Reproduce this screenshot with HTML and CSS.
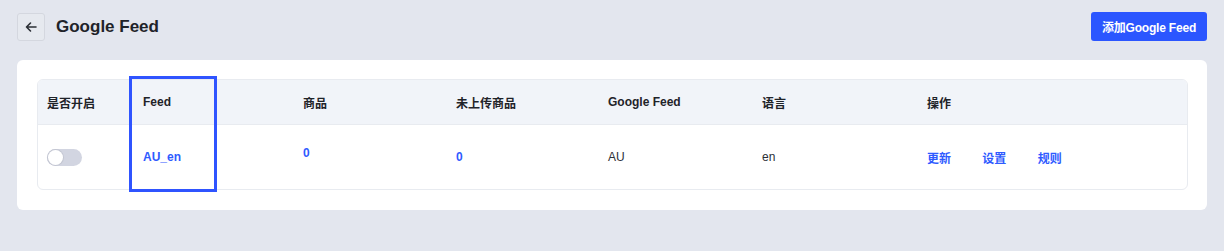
FILE: index.html
```html
<!DOCTYPE html>
<html lang="zh-CN">
<head>
    <meta charset="UTF-8">
    <meta name="viewport" content="width=device-width, initial-scale=1.0">
    <title>Google Feed</title>
    <link rel="stylesheet" href="styles.css">
</head>
<body>
    <div class="page-header">
        <div class="header-left">
            <button class="back-btn" aria-label="返回">
                <svg width="14" height="14" viewBox="0 0 14 14">
                    <path d="M12 7H2.5M6.5 3L2.5 7l4 4" fill="none" stroke="#2b2f36" stroke-width="1.6" stroke-linecap="round" stroke-linejoin="round"/>
                </svg>
            </button>
            <h1>Google Feed</h1>
        </div>
        <button class="primary-btn">添加Google Feed</button>
    </div>

    <div class="card">
        <div class="table-wrap">
            <table class="feed-table">
                <colgroup>
                    <col style="width: 96px">
                    <col style="width: 160px">
                    <col style="width: 153px">
                    <col style="width: 152px">
                    <col style="width: 154px">
                    <col style="width: 165px">
                    <col>
                </colgroup>
                <thead>
                    <tr>
                        <th>是否开启</th>
                        <th>Feed</th>
                        <th>商品</th>
                        <th>未上传商品</th>
                        <th>Google Feed</th>
                        <th>语言</th>
                        <th>操作</th>
                    </tr>
                </thead>
                <tbody>
                    <tr>
                        <td><span class="switch"><span class="knob"></span></span></td>
                        <td><a class="link">AU_en</a></td>
                        <td><a class="link raised">0</a></td>
                        <td><a class="link">0</a></td>
                        <td>AU</td>
                        <td>en</td>
                        <td class="actions">
                            <a class="link">更新</a>
                            <a class="link">设置</a>
                            <a class="link">规则</a>
                        </td>
                    </tr>
                </tbody>
            </table>
            <div class="highlight"></div>
        </div>
    </div>
</body>
</html>
```

FILE: styles.css
```css
* {
    margin: 0;
    padding: 0;
    box-sizing: border-box;
}

body {
    background: #e3e6ee;
    font-family: 'Liberation Sans', 'Noto Sans CJK SC', sans-serif;
    color: #1f2329;
    width: 1224px;
    height: 251px;
    overflow: hidden;
}

.page-header {
    display: flex;
    justify-content: space-between;
    align-items: flex-start;
    padding: 12px 17px 0 17px;
    height: 60px;
}

.header-left {
    display: flex;
    align-items: center;
    gap: 11px;
    height: 29px;
}

.back-btn {
    width: 28px;
    height: 28px;
    border: 1px solid #d4d7df;
    border-radius: 3px;
    background: #e6e9ef;
    display: flex;
    align-items: center;
    justify-content: center;
    cursor: pointer;
}

h1 {
    font-size: 17px;
    font-weight: 700;
    color: #1f2329;
}

.primary-btn {
    width: 116px;
    height: 29px;
    border: none;
    border-radius: 3px;
    background: #2b56ff;
    color: #fff;
    font-family: 'Liberation Sans', 'Noto Sans CJK SC', sans-serif;
    font-size: 12px;
    font-weight: 700;
    letter-spacing: -0.2px;
    cursor: pointer;
}

.card {
    margin: 0 17px;
    background: #fff;
    border-radius: 6px;
    padding: 19px 19px 20px 20px;
}

.table-wrap {
    position: relative;
}

.feed-table {
    width: 100%;
    border-collapse: separate;
    border-spacing: 0;
    table-layout: fixed;
    border: 1px solid #e8ebf0;
    border-radius: 6px;
    overflow: hidden;
    font-size: 12px;
}

.feed-table th {
    background: #f1f4f9;
    height: 45px;
    text-align: left;
    font-weight: 700;
    padding-left: 9px;
    color: #1f2329;
    border-bottom: 1px solid #e8ebf0;
}

.feed-table td {
    height: 64px;
    padding-left: 9px;
    color: #2b2f36;
}

.link {
    color: #2f5bff;
    font-weight: 700;
    cursor: pointer;
}

.raised {
    position: relative;
    top: -4px;
}

.actions .link {
    margin-right: 28px;
}

.switch {
    display: inline-block;
    position: relative;
    width: 35px;
    height: 17px;
    border-radius: 9px;
    background: #d2d5e1;
    vertical-align: middle;
}

.knob {
    position: absolute;
    left: 1px;
    top: 1px;
    width: 15px;
    height: 15px;
    border-radius: 50%;
    background: #fff;
    box-shadow: 0 0 0 1px #c3c6d2;
}

.highlight {
    position: absolute;
    left: 92px;
    top: -3px;
    width: 88px;
    height: 116px;
    border: 3px solid #2f54ff;
    pointer-events: none;
}
```
